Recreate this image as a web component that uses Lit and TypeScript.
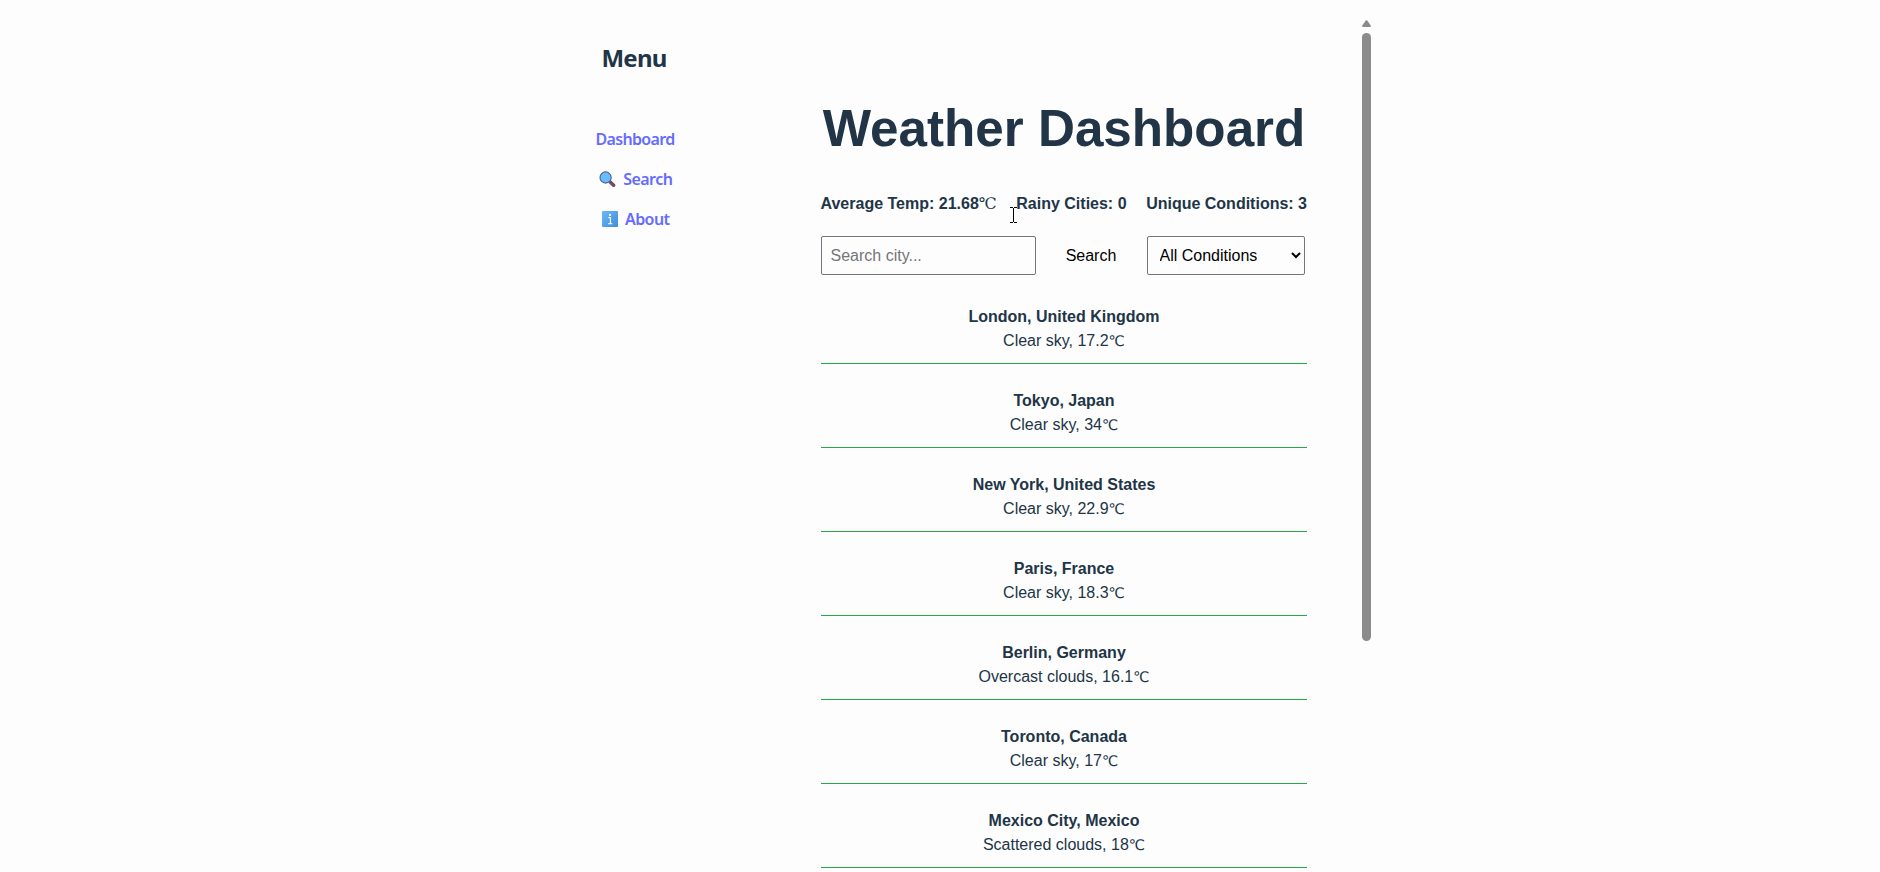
import { LitElement, html, css } from "lit";
import { customElement, state } from "lit/decorators.js";

interface City {
  name: string;
  condition: string;
  temp: string;
}

const CITIES: City[] = [
  { name: "London, United Kingdom", condition: "Clear sky", temp: "17.2" },
  { name: "Tokyo, Japan", condition: "Clear sky", temp: "34" },
  { name: "New York, United States", condition: "Clear sky", temp: "22.9" },
  { name: "Paris, France", condition: "Clear sky", temp: "18.3" },
  { name: "Berlin, Germany", condition: "Overcast clouds", temp: "16.1" },
  { name: "Toronto, Canada", condition: "Clear sky", temp: "17" },
  { name: "Mexico City, Mexico", condition: "Scattered clouds", temp: "18" },
];

@customElement("side-menu")
class SideMenu extends LitElement {
  static styles = css`
    :host {
      display: flex;
      flex-direction: column;
      align-items: center;
      width: 110px;
      padding-top: 40px;
      font-family: "Noto Sans", "Open Sans", sans-serif;
    }
    .title {
      margin: 0;
      padding-right: 2px;
      font-size: 24px;
      line-height: 36px;
      font-weight: 700;
      letter-spacing: -0.8px;
      color: #213547;
    }
    .links {
      display: flex;
      flex-direction: column;
      align-items: center;
      gap: 16px;
      margin-top: 51px;
    }
    .link {
      display: flex;
      align-items: center;
      gap: 7px;
      height: 24px;
      font-size: 16px;
      line-height: 24px;
      font-weight: 600;
      letter-spacing: -0.65px;
      color: #646cff;
      text-decoration: none;
      white-space: nowrap;
    }
    .with-icon { padding-left: 1.5px; letter-spacing: -0.55px; }
    .icon { display: block; }
  `;

  render() {
    return html`
      <h2 class="title">Menu</h2>
      <nav class="links">
        <a class="link">Dashboard</a>
        <a class="link with-icon">
          <svg class="icon" width="17" height="17" viewBox="0 0 17 17">
            <path d="M11.4 11.2 14.6 14.2" stroke="#754a70" stroke-width="3.6" stroke-linecap="round" />
            <circle cx="6.6" cy="6.5" r="5.6" fill="#6bbcff" stroke="#4d6489" stroke-width="1.1" />
          </svg>
          Search
        </a>
        <a class="link with-icon">
          <svg class="icon" width="16" height="16" viewBox="0 0 16 16">
            <defs>
              <linearGradient id="tile" x1="0" y1="0" x2="1" y2="1">
                <stop offset="0" stop-color="#6cb8f4" />
                <stop offset="1" stop-color="#3f8de0" />
              </linearGradient>
            </defs>
            <rect width="16" height="16" rx="1" fill="url(#tile)" />
            <circle cx="8" cy="3.9" r="1.1" fill="#fff" />
            <path d="M6.4 6.6h2v6M6 12.8h4.4" fill="none" stroke="#fff" stroke-width="1.1" />
          </svg>
          About
        </a>
      </nav>
    `;
  }
}

@customElement("city-row")
class CityRow extends LitElement {
  static properties = { city: { attribute: false } };
  declare city: City;

  static styles = css`
    :host {
      display: block;
      box-sizing: border-box;
      height: 84px;
      padding-top: 25px;
      border-bottom: 1px solid #28a745;
      text-align: center;
      line-height: 24px;
    }
    .name { font-weight: 700; }
    .unit {
      font-family: "DejaVu Sans", sans-serif;
      font-size: 14.5px;
      font-weight: 400;
      line-height: 1;
    }
  `;

  render() {
    return html`
      <div class="name">${this.city.name}</div>
      <div>${this.city.condition}, ${this.city.temp}<span class="unit">℃</span></div>
    `;
  }
}

@customElement("app-root")
class AppRoot extends LitElement {
  @state() private cities = CITIES;

  static styles = css`
    :host {
      display: flex;
      box-sizing: border-box;
      position: relative;
      height: 872px;
      padding-left: 580px;
      overflow: hidden;
      background: #fdfdfd;
      color: #213547;
      font: 16px/24px "Liberation Sans", Arial, sans-serif;
    }
    .main {
      width: 486px;
      margin-left: 131px;
      padding-top: 101px;
      flex: none;
    }
    .heading {
      margin: 0;
      font-size: 51.2px;
      line-height: 56px;
      font-weight: 700;
      text-align: center;
      white-space: nowrap;
    }
    .stats {
      display: flex;
      justify-content: space-between;
      margin: 35px 0 0 -0.5px;
      font-weight: 700;
      white-space: nowrap;
    }
    .unit { font-family: "DejaVu Serif", serif; font-weight: 400; line-height: 1; }
    .controls {
      display: flex;
      align-items: center;
      margin: 20px 0 5px;
      height: 39px;
    }
    .field,
    .filter {
      box-sizing: border-box;
      height: 39px;
      margin: 0;
      border: 1px solid #767676;
      border-radius: 2px;
      background: #fdfdfd;
      font: inherit;
    }
    .field { width: 215px; padding: 0 9px 0 8.5px; }
    .field::placeholder { color: #757575; }
    .search {
      width: 111px;
      padding: 0 1px 0 0;
      border: 0;
      background: none;
      font: inherit;
      color: #000;
      text-align: center;
    }
    .filter { width: 158px; padding: 0 0 0 7.5px; color: #000; }
    .scroll {
      display: flex;
      flex-direction: column;
      align-items: center;
      gap: 6px;
      width: 9px;
      margin-left: 55px;
      padding-top: 20px;
    }
    .arrow { display: block; }
    .thumb { width: 9px; height: 608px; border-radius: 4.5px; background: #8b8b8b; }
    .cursor { position: absolute; left: 1010px; top: 207px; }
  `;

  render() {
    return html`
      <side-menu></side-menu>
      <main class="main">
        <h1 class="heading">Weather Dashboard</h1>
        <div class="stats">
          <span>Average Temp: 21.68<span class="unit">℃</span></span>
          <span>Rainy Cities: 0</span>
          <span>Unique Conditions: 3</span>
        </div>
        <div class="controls">
          <input class="field" placeholder="Search city..." />
          <button class="search">Search</button>
          <select class="filter"><option>All Conditions</option></select>
        </div>
        ${this.cities.map((c) => html`<city-row .city=${c}></city-row>`)}
      </main>
      <div class="scroll">
        <svg class="arrow" width="9" height="7" viewBox="0 0 9 7">
          <path d="M4.5 1.1 8 6H1Z" fill="#8b8b8b" stroke="#8b8b8b" stroke-width="1.8" stroke-linejoin="round" />
        </svg>
        <div class="thumb"></div>
      </div>
      <svg class="cursor" width="7" height="16" viewBox="0 0 7 16" shape-rendering="crispEdges">
        <path d="M0 0h3v1H0zM4 0h3v1H4zM3 1h1v14H3zM0 15h3v1H0zM4 15h3v1H4z" fill="#000" />
      </svg>
    `;
  }
}
